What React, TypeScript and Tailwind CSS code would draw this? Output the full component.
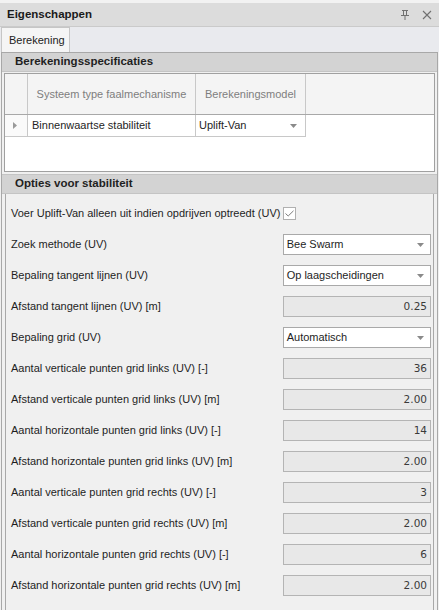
import React from "react";

const font = "font-['Liberation_Sans','Noto_Sans',sans-serif]";

function DropArrow() {
  return (
    <svg width="7" height="4" viewBox="0 0 7 4" className="flex-none">
      <path d="M0 0 H7 L3.5 4 Z" fill="#8a8a8a" />
    </svg>
  );
}

function Select({ value }: { value: string }) {
  return (
    <div className="w-[149px] h-[21px] bg-white border border-[#a9a9a9] flex items-center pl-[3px] pr-[6px] justify-between">
      <span>{value}</span>
      <DropArrow />
    </div>
  );
}

function NumField({ value }: { value: string }) {
  return (
    <div className="w-[149px] h-[21px] bg-[#e8e8e8] border border-[#b4b4b4] flex items-center justify-end pr-[3px] text-[#3a3a3a] font-['DejaVu_Sans',sans-serif] text-[10.5px]">
      {value}
    </div>
  );
}

type Row = { label: string; kind: "select" | "num"; value: string };

const rows: Row[] = [
  { label: "Zoek methode (UV)", kind: "select", value: "Bee Swarm" },
  { label: "Bepaling tangent lijnen (UV)", kind: "select", value: "Op laagscheidingen" },
  { label: "Afstand tangent lijnen (UV) [m]", kind: "num", value: "0.25" },
  { label: "Bepaling grid (UV)", kind: "select", value: "Automatisch" },
  { label: "Aantal verticale punten grid links (UV) [-]", kind: "num", value: "36" },
  { label: "Afstand verticale punten grid links (UV) [m]", kind: "num", value: "2.00" },
  { label: "Aantal horizontale punten grid links (UV) [-]", kind: "num", value: "14" },
  { label: "Afstand horizontale punten grid links (UV) [m]", kind: "num", value: "2.00" },
  { label: "Aantal verticale punten grid rechts (UV) [-]", kind: "num", value: "3" },
  { label: "Afstand verticale punten grid rechts (UV) [m]", kind: "num", value: "2.00" },
  { label: "Aantal horizontale punten grid rechts (UV) [-]", kind: "num", value: "6" },
  { label: "Afstand horizontale punten grid rechts (UV) [m]", kind: "num", value: "2.00" },
];

export default function App() {
  return (
    <div className={`w-[439px] h-[610px] overflow-hidden bg-[#f0f0f0] text-[11px] text-[#1e1e1e] flex flex-col ${font}`}>
      <div className="h-[3px] bg-[#f2f2f2] flex-none" />
      {/* title bar */}
      <div className="h-[24px] flex-none bg-[#dcdcdc] border-b border-[#cacaca] flex items-center pl-[7px] pr-[7px]">
        <span className="font-bold text-[11.5px] text-[#1a1a1a]">Eigenschappen</span>
        <div className="ml-auto flex items-center gap-[13px]">
          <svg width="8" height="10" viewBox="0 0 8 10">
            <path d="M1 0.5 H7 M2.5 0.5 V5 M5.5 0.5 V5 M0 5.5 H8 M4 5.5 V10" stroke="#707070" strokeWidth="1" fill="none" />
          </svg>
          <svg width="10" height="10" viewBox="0 0 10 10">
            <path d="M1 1 L9 9 M9 1 L1 9" stroke="#707070" strokeWidth="1.1" />
          </svg>
        </div>
      </div>
      {/* tab strip */}
      <div className="h-[25px] flex-none bg-[#e9eaee] flex items-end pl-[1px]">
        <div className="w-[69px] h-[25px] bg-[#f5f5f5] border-l border-t border-r border-[#c6c6c6] flex items-center pl-[7px] text-[#222]">
          Berekening
        </div>
      </div>
      {/* content */}
      <div className="flex-1 mx-[1px] border-x border-t border-[#a8a8a8] flex flex-col min-h-0">
        <div className="h-[19px] flex-none bg-[#d3d3d3] border-b border-[#c4c4c4] flex items-center pl-[13px] font-bold text-[11.5px] text-[#1f1f1f]">
          Berekeningsspecificaties
        </div>
        <div className="h-[102px] flex-none px-[2px] pt-[1px] pb-[2px] bg-[#f0f0f0]">
          <div className="h-full border border-[#a0a0a0] bg-white flex flex-col">
            <div className="h-[41px] flex bg-[#f4f4f4] border-b border-[#a8a8a8] text-[#7e7e7e]">
              <div className="w-[23px] border-r border-[#c8c8c8]" />
              <div className="w-[168px] border-r border-[#c8c8c8] flex items-center justify-center">
                Systeem type faalmechanisme
              </div>
              <div className="w-[110px] border-r border-[#c8c8c8] flex items-center justify-center">
                Berekeningsmodel
              </div>
              <div className="flex-1" />
            </div>
            <div className="h-[22px] flex">
              <div className="w-[23px] border-r border-b border-[#c8c8c8] flex items-center pl-[8px] bg-[#fafafa]">
                <svg width="4" height="7" viewBox="0 0 4 7">
                  <path d="M0 0 L4 3.5 L0 7 Z" fill="#9a9a9a" />
                </svg>
              </div>
              <div className="w-[168px] border-r border-b border-[#c8c8c8] flex items-center pl-[4px]">
                Binnenwaartse stabiliteit
              </div>
              <div className="w-[110px] border-r border-b border-[#c8c8c8] flex items-center pl-[3px] pr-[8px] justify-between">
                <span>Uplift-Van</span>
                <DropArrow />
              </div>
              <div className="flex-1" />
            </div>
          </div>
        </div>
        <div className="h-[20px] flex-none bg-[#d3d3d3] border-y border-[#c4c4c4] flex items-center pl-[13px] font-bold text-[11.5px] text-[#1f1f1f]">
          Opties voor stabiliteit
        </div>
        <div className="flex-1 px-[3px]">
          <div className="h-full border-x border-[#a8a8a8] pl-[5px] pr-[2px] pt-[9px] flex flex-col gap-[10px]">
            <div className="h-[21px] flex items-center">
              <span className="w-[272px]">Voer Uplift-Van alleen uit indien opdrijven optreedt (UV)</span>
              <div className="w-[13px] h-[13px] border border-[#b0b0b0] bg-white flex items-center justify-center">
                <svg width="9" height="7" viewBox="0 0 9 7">
                  <path d="M0.5 3.5 L3.2 6 L8.5 0.8" stroke="#7a7a7a" strokeWidth="1" fill="none" />
                </svg>
              </div>
            </div>
            {rows.map((r) => (
              <div key={r.label} className="h-[21px] flex items-center">
                <span className="w-[273px]">{r.label}</span>
                {r.kind === "select" ? <Select value={r.value} /> : <NumField value={r.value} />}
              </div>
            ))}
          </div>
        </div>
      </div>
    </div>
  );
}
